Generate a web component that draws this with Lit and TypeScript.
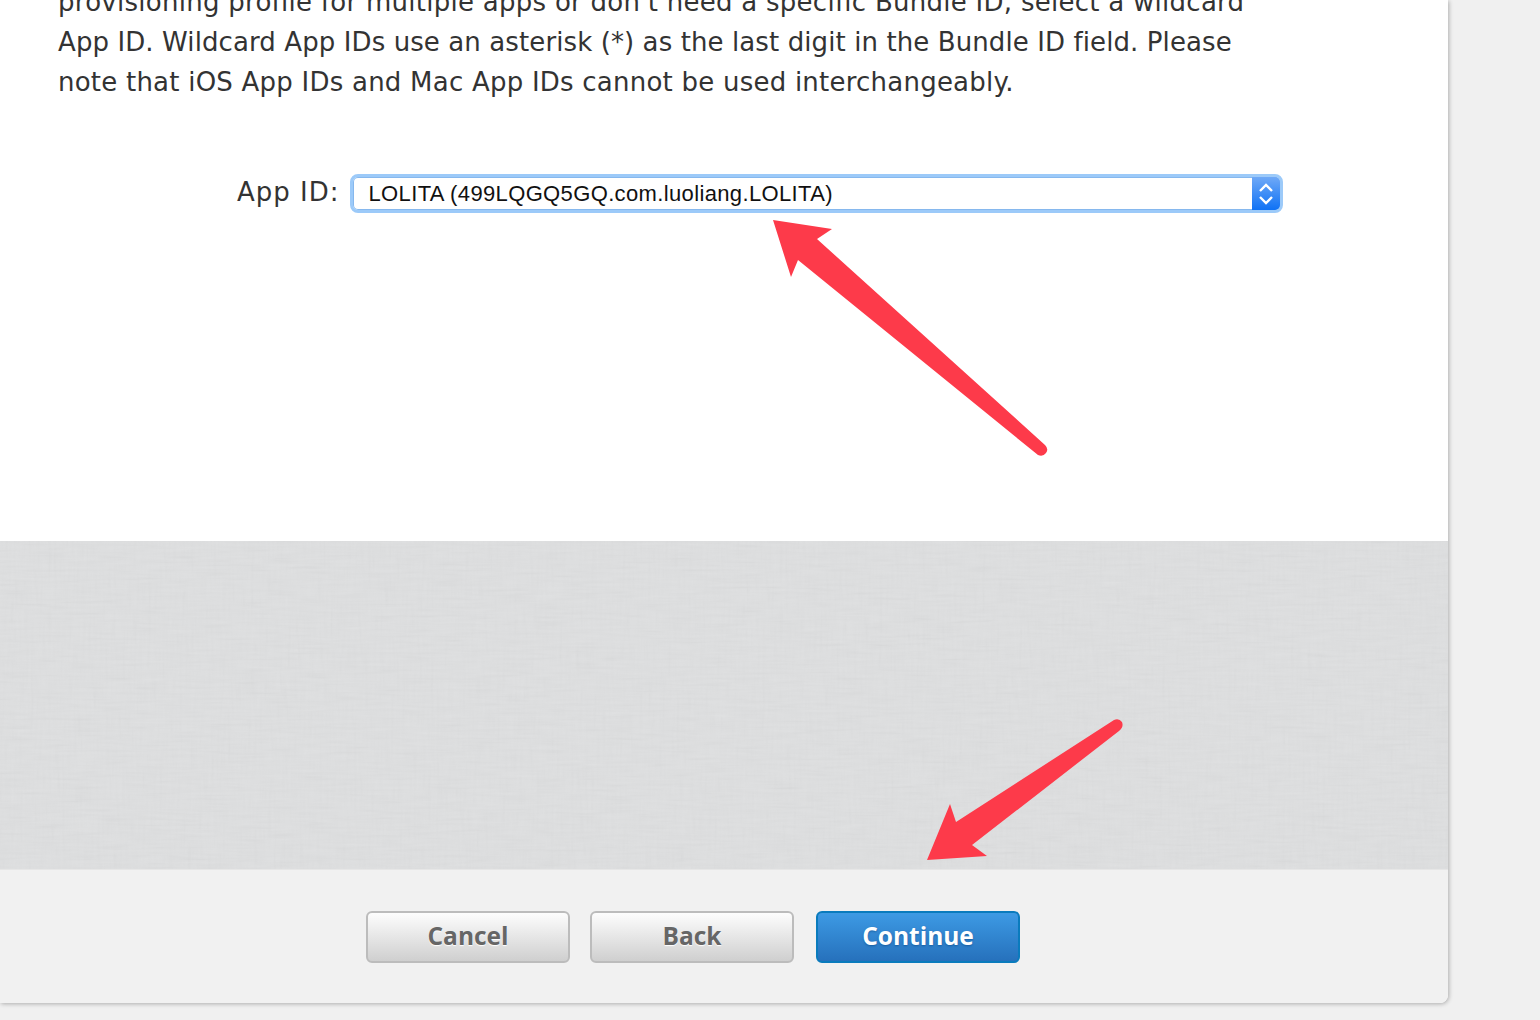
import { LitElement, html, css, svg } from "lit";
import { customElement } from "lit/decorators.js";

@customElement("app-root")
export class AppRoot extends LitElement {
  static styles = css`
    :host {
      display: block;
      position: relative;
      width: 1540px;
      height: 1020px;
      overflow: hidden;
      background: #f0f0f0;
      font-family: "DejaVu Sans", sans-serif;
    }
    .card {
      width: 1448px;
      height: 1003px;
      display: flex;
      flex-direction: column;
      background: #fff;
      border-radius: 0 0 8px 0;
      overflow: hidden;
      box-shadow: 1px 1px 4px rgba(0, 0, 0, 0.28);
    }
    .main {
      height: 541px;
      flex: none;
      background: #fff;
      overflow: hidden;
    }
    .intro {
      margin: -18px 0 0 58px;
      width: 1240px;
      font-size: 26px;
      line-height: 40px;
      color: #333;
      white-space: nowrap;
    }
    .intro span {
      display: block;
    }
    .intro .l1 {
      letter-spacing: 0.27px;
    }
    .intro .l2 {
      letter-spacing: 0.1px;
    }
    .intro .l3 {
      letter-spacing: 0.23px;
    }
    .field {
      margin-top: 72px;
      display: flex;
      align-items: center;
      padding-left: 237px;
      gap: 10px;
      height: 39px;
    }
    .label {
      font-size: 26px;
      line-height: 36px;
      letter-spacing: 1px;
      color: #333;
      margin-top: -4px;
    }
    .select {
      box-sizing: border-box;
      width: 933px;
      height: 39px;
      display: flex;
      align-items: stretch;
      border: 3px solid #9ccaf9;
      border-radius: 8px;
      background: #fff;
      box-shadow: inset 0 0 0 1px #86b8ee;
    }
    .value {
      flex: 1;
      padding-left: 16px;
      font: 22px/33px "Liberation Sans", sans-serif;
      letter-spacing: 0.36px;
      color: #111;
    }
    .stepper {
      width: 28px;
      display: flex;
      align-items: center;
      justify-content: center;
      background: linear-gradient(#6fa9f7, #0f72f5);
      border-radius: 0 5px 5px 0;
    }
    .band {
      height: 328px;
      flex: none;
      position: relative;
      background-color: #dfe0e1;
    }
    .grain {
      position: absolute;
      inset: 0;
      width: 100%;
      height: 100%;
      opacity: 0.09;
    }
    .footer {
      flex: 1;
      background: #f1f1f1;
      border-top: 1px solid #e6e6e6;
      display: flex;
      gap: 20px;
      padding: 41px 0 0 366px;
      box-sizing: border-box;
    }
    .btn {
      box-sizing: border-box;
      width: 204px;
      height: 52px;
      border-radius: 6px;
      font: bold 24.5px/46px "Open Sans", sans-serif;
      text-align: center;
    }
    .grey {
      border: 2px solid #bcbcbc;
      background: linear-gradient(#fdfdfd, #cfcfcf);
      color: #666;
      text-shadow: 0 1px 1px #fff;
    }
    .blue {
      margin-left: 2px;
      border: 2px solid #0a7bbd;
      background: linear-gradient(#3d9ae4, #2671bc);
      color: #fff;
      text-shadow: 0 1px 2px rgba(0, 60, 120, 0.5);
    }
    .overlay {
      position: absolute;
      inset: 0;
      width: 1540px;
      height: 1020px;
      pointer-events: none;
    }
  `;

  render() {
    return html`
      <div class="card">
        <div class="main">
          <div class="intro">
            <span class="l1">provisioning profile for multiple apps or don't need a specific Bundle ID, select a wildcard</span>
            <span class="l2">App ID. Wildcard App IDs use an asterisk (*) as the last digit in the Bundle ID field. Please</span>
            <span class="l3">note that iOS App IDs and Mac App IDs cannot be used interchangeably.</span>
          </div>
          <div class="field">
            <span class="label">App ID:</span>
            <div class="select">
              <span class="value">LOLITA (499LQGQ5GQ.com.luoliang.LOLITA)</span>
              <span class="stepper">
                <svg width="16" height="26" viewBox="0 0 16 26" fill="none" stroke="#fff" stroke-width="2.4">
                  <path d="M2 10 8 4 14 10M2 16 8 22 14 16" />
                </svg>
              </span>
            </div>
          </div>
        </div>
        <div class="band">
          <svg class="grain" aria-hidden="true">
            <filter id="warp" x="0" y="0" width="100%" height="100%">
              <feTurbulence type="fractalNoise" baseFrequency="0.35 0.03" numOctaves="2" seed="4" />
              <feColorMatrix type="saturate" values="0" />
            </filter>
            <filter id="weft" x="0" y="0" width="100%" height="100%">
              <feTurbulence type="fractalNoise" baseFrequency="0.03 0.35" numOctaves="2" seed="9" />
              <feColorMatrix type="saturate" values="0" />
            </filter>
            <rect width="100%" height="100%" filter="url(#warp)" />
            <rect width="100%" height="100%" filter="url(#weft)" />
          </svg>
        </div>
        <div class="footer">
          <div class="btn grey">Cancel</div>
          <div class="btn grey">Back</div>
          <div class="btn blue">Continue</div>
        </div>
      </div>
      <svg class="overlay" viewBox="0 0 1540 1020">
        ${svg`<path fill="#fd3a4a" d="M773 220 832 229 817 239 1045 445Q1049 449 1046 453 1043 457 1038 455L798 260 791 277Z"/>`}
        ${svg`<path fill="#fd3a4a" d="M927 860 950 804 956 822 1114 720Q1119 718 1122 722 1124 727 1119 731L972 845 987 856Z"/>`}
      </svg>
    `;
  }
}
